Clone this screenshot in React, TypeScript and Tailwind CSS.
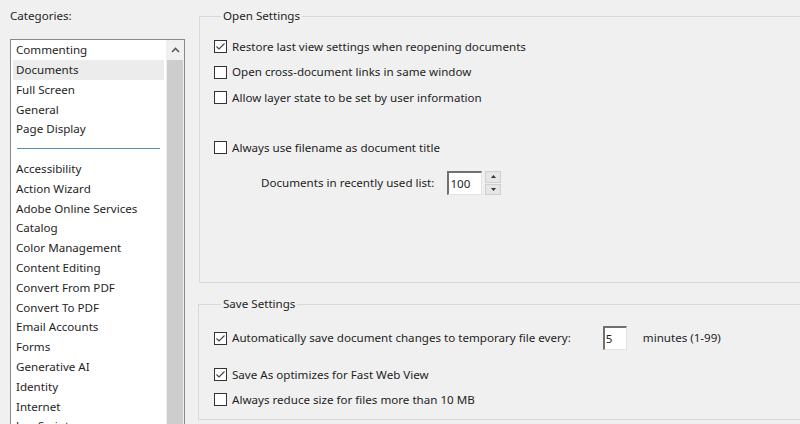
const categories = [
  'Commenting',
  'Documents',
  'Full Screen',
  'General',
  'Page Display',
  '-',
  'Accessibility',
  'Action Wizard',
  'Adobe Online Services',
  'Catalog',
  'Color Management',
  'Content Editing',
  'Convert From PDF',
  'Convert To PDF',
  'Email Accounts',
  'Forms',
  'Generative AI',
  'Identity',
  'Internet',
  'JavaScript',
];

const CheckBox = ({ checked }: { checked?: boolean }) => (
  <span className="w-[13px] h-[13px] shrink-0 border border-[#333333] bg-white flex items-center justify-center">
    {checked && (
      <svg width="11" height="11" viewBox="0 0 11 11">
        <polyline points="1.5,5.5 4,8 9.5,2.5" fill="none" stroke="#444444" strokeWidth="1.2" />
      </svg>
    )}
  </span>
);

const CheckRow = ({ label, checked, className = '' }: { label: string; checked?: boolean; className?: string }) => (
  <div className={`flex items-center gap-[5px] h-[25px] ${className}`}>
    <CheckBox checked={checked} />
    <span>{label}</span>
  </div>
);

const NumField = ({ value, width }: { value: string; width: string }) => (
  <div
    className={`${width} h-[24px] bg-white border-t-2 border-l-2 border-t-[#707070] border-l-[#707070] border-r border-b border-r-[#e3e3e3] border-b-[#e3e3e3] flex items-center pl-[1px]`}
  >
    {value}
  </div>
);

const GroupBox = ({ title, className = '', children }: { title: string; className?: string; children: React.ReactNode }) => (
  <fieldset className={`border border-[#d9d9d9] w-[620px] shrink-0 ${className}`}>
    <legend className="ml-[7px] px-[2px] leading-[16px]">{title}</legend>
    {children}
  </fieldset>
);

export default function App() {
  return (
    <div className="w-[800px] h-[424px] overflow-hidden bg-[#f0f0f0] flex text-[11.6px] text-[#1e1e1e] font-['Noto_Sans',sans-serif]">
      {/* Categories */}
      <div className="w-[199px] shrink-0 pl-[10px] flex flex-col">
        <div className="h-[39px] shrink-0 pt-[8px] leading-[16px]">Categories:</div>
        <div className="w-[175px] flex-1 min-h-0 overflow-hidden border border-[#8a8a8a] border-b-0 bg-white flex">
          <div className="flex-1 pl-[2px] pr-[2px]">
            {categories.map((c, i) =>
              c === '-' ? (
                <div key={i} className="h-[19.8px] flex items-center px-[4px]">
                  <div className="w-full h-[1px] bg-[#4f94a8]" />
                </div>
              ) : (
                <div
                  key={c}
                  className={`h-[19.8px] flex items-center pl-[3px] ${c === 'Documents' ? 'bg-[#ececec]' : ''}`}
                >
                  {c}
                </div>
              )
            )}
          </div>
          {/* Scrollbar */}
          <div className="w-[18px] bg-[#f0f0f0] flex flex-col items-center">
            <div className="h-[20px] w-full flex items-center justify-center">
              <svg width="9" height="6" viewBox="0 0 9 6">
                <polyline points="1,5 4.5,1.5 8,5" fill="none" stroke="#5a5a5a" strokeWidth="1.6" />
              </svg>
            </div>
            <div className="w-[16px] flex-1 bg-[#cdcdcd]" />
          </div>
        </div>
      </div>

      {/* Settings */}
      <div className="flex-1 flex flex-col pt-[8px]">
        <GroupBox title="Open Settings" className="h-[275px] pl-[14px] pt-[10px]">
          <CheckRow label="Restore last view settings when reopening documents" checked />
          <CheckRow label="Open cross-document links in same window" className="mt-[0.5px]" />
          <CheckRow label="Allow layer state to be set by user information" className="mt-[0.5px]" />
          <CheckRow label="Always use filename as document title" className="mt-[25px]" />
          <div className="flex items-center h-[24px] mt-[11px] pl-[47px]">
            <span>Documents in recently used list:</span>
            <div className="ml-[13px]">
              <NumField value="100" width="w-[35px]" />
            </div>
            <div className="ml-[3px] w-[16px] h-[24px] flex flex-col gap-[1px]">
              <div className="flex-1 bg-[#e6e6e6] border border-[#cfcfcf] flex items-center justify-center">
                <svg width="5" height="3" viewBox="0 0 5 3">
                  <polygon points="0,3 2.5,0 5,3" fill="#333333" />
                </svg>
              </div>
              <div className="flex-1 bg-[#e6e6e6] border border-[#cfcfcf] flex items-center justify-center">
                <svg width="5" height="3" viewBox="0 0 5 3">
                  <polygon points="0,0 2.5,3 5,0" fill="#333333" />
                </svg>
              </div>
            </div>
          </div>
        </GroupBox>

        <GroupBox title="Save Settings" className="h-[124px] mt-[13px] -ml-[1px] pl-[15px] pt-[14px]">
          <div className="flex items-center h-[24px]">
            <CheckRow label="Automatically save document changes to temporary file every:" checked />
            <div className="ml-[32px]">
              <NumField value="5" width="w-[24px]" />
            </div>
            <span className="ml-[16px]">minutes (1-99)</span>
          </div>
          <CheckRow label="Save As optimizes for Fast Web View" checked className="mt-[12px]" />
          <CheckRow label="Always reduce size for files more than 10 MB" />
        </GroupBox>
      </div>
    </div>
  );
}
